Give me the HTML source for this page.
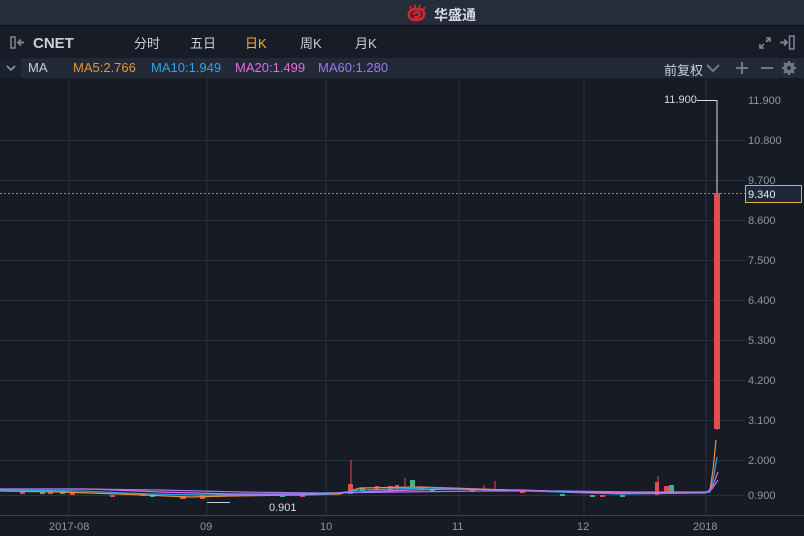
<!DOCTYPE html>
<html><head><meta charset="utf-8"><style>
*{margin:0;padding:0;box-sizing:border-box}
body{width:804px;height:536px;background:#171b25;font-family:"Liberation Sans","Noto Sans CJK SC",sans-serif;overflow:hidden;position:relative}
.top{position:absolute;left:0;top:0;width:804px;height:26px;background:#252c3a;border-bottom:1px solid #0c0e13}
.top .t{position:absolute;left:434px;top:5px;color:#d6dce6;font-size:14px;font-weight:bold}
.hdr{position:absolute;left:0;top:27px;width:804px;height:31px;background:#181c26}
.hdr span{position:absolute;top:6px;font-size:13px;color:#c8d0dc}
.ma{position:absolute;left:0;top:58px;width:804px;height:20px;background:#222a38}
.ma span{position:absolute;top:2px;font-size:13px}
</style></head><body>
<div class="top">
<svg style="position:absolute;left:406px;top:5px" width="22" height="17" viewBox="0 0 22 17"><path d="M3 11 Q2 4 11 4 Q19 4 18 10 Q17 15 10 15 Q4 15 3 11Z M7 10 Q8 7 12 7 Q15 8 13 11 Q11 13 8 12" fill="none" stroke="#d8272a" stroke-width="2.6"/><path d="M5 4 L4 1 M9 3 L9 0 M13 3 L14 0 M17 5 L19 2" stroke="#d8272a" stroke-width="1.8"/></svg>
<span class="t">华盛通</span></div>
<div class="hdr">
<svg style="position:absolute;left:10px;top:9px" width="16" height="13"><rect x="1" y="1" width="4" height="11" fill="none" stroke="#7d8796" stroke-width="1.5"/><path d="M14 6.5H9M11 3.5L8 6.5 11 9.5" fill="none" stroke="#7d8796" stroke-width="1.8"/></svg>
<span style="left:33px;top:8px;font-size:15px;font-weight:bold;color:#c8d0dc">CNET</span>
<span style="left:134px">分时</span><span style="left:190px">五日</span><span style="left:245px;color:#f0b429">日K</span><span style="left:300px">周K</span><span style="left:355px">月K</span>
<svg style="position:absolute;left:758px;top:9px" width="14" height="14"><path d="M2 12L6 8M2 8V12H6M12 2L8 6M8 2H12V6" fill="none" stroke="#7d8796" stroke-width="1.6"/></svg>
<svg style="position:absolute;left:779px;top:7px" width="17" height="17"><path d="M1 8.5H7M5 5.5L8 8.5 5 11.5" fill="none" stroke="#7d8796" stroke-width="1.8"/><rect x="10.5" y="2" width="4.5" height="13" fill="none" stroke="#7d8796" stroke-width="1.5"/></svg>
</div>
<div class="ma">
<div style="position:absolute;left:0;top:0;width:21px;height:20px;background:#1b2130"></div>
<svg style="position:absolute;left:6px;top:7px" width="10" height="7"><path d="M1 1L5 5 9 1" fill="none" stroke="#8a94a3" stroke-width="1.6"/></svg>
<span style="left:28px;color:#c8d0dc">MA</span>
<span style="left:73px;color:#e8943a">MA5:2.766</span>
<span style="left:151px;color:#2fa5e8">MA10:1.949</span>
<span style="left:235px;color:#e86ae0">MA20:1.499</span>
<span style="left:318px;color:#9b7bf0">MA60:1.280</span>
<span style="left:664px;color:#c8d0dc">前复权</span>
<svg style="position:absolute;left:706px;top:6px" width="14" height="9"><path d="M1 1L7 7 13 1" fill="none" stroke="#6f7888" stroke-width="2"/></svg>
<svg style="position:absolute;left:736px;top:4px" width="12" height="12"><path d="M6 0V12M0 6H12" stroke="#6f7888" stroke-width="2"/></svg>
<svg style="position:absolute;left:761px;top:4px" width="12" height="12"><path d="M0 6H12" stroke="#6f7888" stroke-width="2"/></svg>
<svg style="position:absolute;left:782px;top:3px" width="14" height="14"><circle cx="7" cy="7" r="4" fill="none" stroke="#6f7888" stroke-width="3"/><path d="M7 0V14M0 7H14M2 2L12 12M12 2L2 12" stroke="#6f7888" stroke-width="2.2"/><circle cx="7" cy="7" r="2" fill="#222a38"/></svg>
</div>
<svg style="position:absolute;left:0;top:78px" width="804" height="458" viewBox="0 78 804 458" font-family="Liberation Sans,sans-serif" font-size="11">
<g stroke="#2a303b" stroke-width="1">
<path d="M69 78V515M207 78V515M326 78V515M459 78V515M584 78V515M706 78V515"/>
<path d="M0 140.5H745M0 180.5H745M0 220.5H745M0 260.5H745M0 300.5H745M0 340.5H745M0 380.5H745M0 420.5H745M0 460.5H745M0 495.5H745"/>
</g>
<path d="M0 515.5H804" stroke="#3a414d"/>
<path d="M0 193.5H745" stroke="#a08a48" stroke-dasharray="2,2"/>
<g fill="#8e97a5" text-anchor="start">
<text x="748" y="104">11.900</text><text x="748" y="144">10.800</text><text x="748" y="184">9.700</text><text x="748" y="224">8.600</text><text x="748" y="264">7.500</text><text x="748" y="304">6.400</text><text x="748" y="344">5.300</text><text x="748" y="384">4.200</text><text x="748" y="424">3.100</text><text x="748" y="464">2.000</text><text x="748" y="499">0.900</text>
<text x="49" y="530">2017-08</text><text x="200" y="530">09</text><text x="320" y="530">10</text><text x="452" y="530">11</text><text x="577" y="530">12</text><text x="693" y="530">2018</text>
</g>
<rect x="745.5" y="185.5" width="56" height="17" fill="#1f2836" stroke="#e0b040"/>
<text x="748" y="198" fill="#e8edf4">9.340</text>
<text x="664" y="103" fill="#d8dde6">11.900</text>
<path d="M697 100.5H717V193" stroke="#d8dde6" fill="none"/>
<path d="M717 193V430" stroke="#e24d4f"/>
<rect x="714" y="193" width="6" height="236" fill="#e24d4f"/>
<text x="269" y="511" fill="#d8dde6">0.901</text>
<path d="M207 502.5H230" stroke="#c8ccd4"/>
<g fill="#e24d4f">
<rect x="348" y="484" width="5" height="10"/><rect x="388" y="486" width="5" height="5"/><rect x="655" y="482" width="4" height="13"/><rect x="664" y="486" width="5" height="8"/><rect x="395" y="485" width="4" height="4"/><rect x="375" y="486" width="4" height="3"/><rect x="420" y="487" width="4" height="3"/>
<rect x="20" y="492" width="5" height="2"/><rect x="48" y="491" width="5" height="3"/><rect x="70" y="493" width="5" height="2"/><rect x="110" y="495" width="5" height="2"/><rect x="140" y="493" width="5" height="3"/><rect x="180" y="496" width="6" height="3"/><rect x="200" y="495" width="5" height="4"/><rect x="240" y="494" width="5" height="2"/><rect x="300" y="495" width="5" height="2"/><rect x="470" y="490" width="5" height="2"/><rect x="520" y="491" width="5" height="2"/><rect x="600" y="495" width="5" height="2"/>
</g>
<g fill="#3bb38a">
<rect x="410" y="480" width="5" height="7"/><rect x="669" y="485" width="5" height="9"/><rect x="40" y="492" width="5" height="2"/><rect x="60" y="491" width="5" height="3"/><rect x="150" y="494" width="5" height="3"/><rect x="280" y="495" width="5" height="2"/><rect x="360" y="488" width="5" height="3"/><rect x="430" y="489" width="5" height="3"/><rect x="560" y="494" width="5" height="2"/><rect x="590" y="495" width="5" height="2"/><rect x="620" y="495" width="5" height="2"/>
</g>
<g stroke="#e24d4f" stroke-width="1"><path d="M351 460V494M658 476V495M405 478V487M495 481V490M484 485V490"/></g>
<polyline fill="none" stroke="#e8943a" stroke-width="1.2" points="0,491 60,492 120,494 190,497 230,496 300,495 340,494 360,488 420,487 480,489 540,491 600,493 650,493 705,493 710,490 713,470 716,440"/>
<polyline fill="none" stroke="#2fa5e8" stroke-width="1.2" points="0,490 80,491 150,494 200,495 260,495 330,494 360,490 430,488 500,490 560,492 620,494 700,493 710,492 714,475 717,457"/>
<polyline fill="none" stroke="#e86ae0" stroke-width="1.2" points="0,489 90,489 160,492 230,494 300,494 340,493 380,491 450,489 520,490 580,492 650,493 708,492 713,485 718,472"/>
<polyline fill="none" stroke="#9b7bf0" stroke-width="1.2" points="0,489 80,489 160,490 240,492 320,493 400,492 480,491 560,491 640,492 706,492 712,489 718,480"/>
</svg>
</body></html>
